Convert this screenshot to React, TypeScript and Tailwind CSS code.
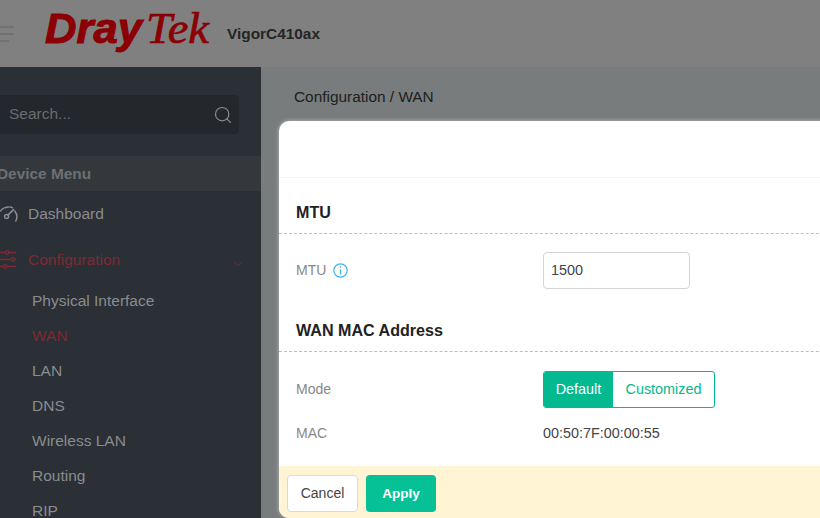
import { Search, ChevronDown } from "lucide-react";

const subItems = ["Physical Interface", "WAN", "LAN", "DNS", "Wireless LAN", "Routing", "RIP"];

function Logo() {
  return (
    <svg width="178" height="54" viewBox="0 0 178 54" className="shrink-0 mr-[-8px]" fill="#8a0005" stroke="#8a0005">
      <text x="1" y="37" fontFamily="'Liberation Sans', Arial, sans-serif" fontWeight="700" fontStyle="italic" fontSize="42" strokeWidth="1" textLength="97" lengthAdjust="spacingAndGlyphs">Dray</text>
      <text x="102" y="37" fontFamily="'Liberation Serif', 'Times New Roman', serif" fontStyle="italic" fontSize="45" strokeWidth="0.7" textLength="63" lengthAdjust="spacingAndGlyphs">Tek</text>
    </svg>
  );
}

function GaugeIcon() {
  return (
    <svg width="20" height="18" viewBox="0 0 20 18" fill="none" stroke="currentColor" strokeWidth="1.5" strokeLinecap="round" className="ml-[-2px]">
      <path d="M1.5 15.5C0 13.5 0 10.5 1 8.5" strokeDasharray="2 1.6" />
      <path d="M2.5 6C5.5 2 11 1 14.5 2.8" strokeDasharray="4 1.5" />
      <path d="M16.8 6C19.3 9.4 19.4 13 17.8 16" />
      <path d="M15.5 4.6L10 10" strokeWidth="1.7" />
      <circle cx="8.6" cy="11.6" r="2" />
    </svg>
  );
}

function SlidersIcon() {
  return (
    <svg width="16" height="19" viewBox="0 0 16 19" fill="none" stroke="currentColor" strokeWidth="1.4">
      <path d="M0 2.5H5.5M9 2.5H16" />
      <circle cx="7.2" cy="2.5" r="1.7" />
      <path d="M0 9.5H11M14.5 9.5H16" />
      <circle cx="12.8" cy="9.5" r="1.7" />
      <path d="M0 16.5H3M6.5 16.5H16" />
      <circle cx="4.8" cy="16.5" r="1.7" />
    </svg>
  );
}

function InfoIcon() {
  return (
    <svg width="15" height="15" viewBox="0 0 15 15" fill="none" stroke="#3db5f0" strokeWidth="1.2">
      <circle cx="7.5" cy="7.5" r="6.7" />
      <path d="M7.5 6.5V11.5" strokeWidth="1.4" />
      <path d="M7.5 3.4V5" strokeWidth="1.4" />
    </svg>
  );
}

export default function App() {
  return (
    <div className="relative flex flex-col w-[820px] h-[518px] overflow-hidden bg-[#787c7c] font-['Liberation_Sans',Arial,sans-serif]">
      <header className="flex items-center h-[67px] shrink-0 bg-[#808080]">
        <div className="flex flex-col gap-[5px] w-[14px]">
          <span className="h-[2px] w-[14px] bg-[#727272]" />
          <span className="h-[2px] w-[14px] bg-[#727272]" />
          <span className="h-[2px] w-[9px] bg-[#727272]" />
        </div>
        <div className="ml-[30px] mt-[-1px]">
          <Logo />
        </div>
        <span className="ml-[13px] text-[15.4px] font-bold text-[#252525]">VigorC410ax</span>
      </header>
      <div className="flex flex-1 min-h-0">
        <aside className="w-[261px] shrink-0 bg-[#2b2f36] overflow-hidden">
          <div className="mt-[28px] ml-[-2px] mr-[22px] h-[39px] flex items-center justify-between rounded bg-[#24272b] pl-[11px] pr-[6px]">
            <span className="text-[15.5px] text-[#6b6d70] mt-[-2px]">Search...</span>
            <Search className="w-[20px] h-[20px] text-[#8b8d8f]" strokeWidth={1.4} />
          </div>
          <div className="mt-[22px] h-[35px] flex items-center bg-[#34383c]">
            <span className="ml-[-3px] text-[15.4px] font-bold text-[#6c7073]">Device Menu</span>
          </div>
          <div className="mt-[5px] h-[35px] flex items-center text-[#8a8c8e]">
            <GaugeIcon />
            <span className="ml-[10px] text-[15.5px]">Dashboard</span>
          </div>
          <div className="mt-[11px] h-[35px] flex items-center text-[#7d2a33]">
            <SlidersIcon />
            <span className="ml-[12px] text-[15.5px]">Configuration</span>
            <ChevronDown className="w-[14px] h-[14px] ml-[111px] mt-[8px]" strokeWidth={1.6} />
          </div>
          <ul className="mt-[6px] pl-[32px] text-[15.5px] text-[#8a8c8e]">
            {subItems.map((label) => (
              <li key={label} className={`h-[35px] leading-[35px] ${label === "WAN" ? "text-[#7d2a33]" : ""}`}>
                {label}
              </li>
            ))}
          </ul>
        </aside>
        <main className="flex-1 min-w-0 pl-[33px] pt-[18px] text-[15.4px] text-[#1e2020]">Configuration / WAN</main>
      </div>

      <div className="absolute left-[279px] top-[121px] w-[600px] h-[397px] flex flex-col rounded-l-[10px] overflow-hidden bg-white shadow-[0_0_4px_rgba(255,255,255,0.5)]">
        <div className="h-[57px] shrink-0 border-b border-[#f5f5f5]" />
        <h3 className="h-[56px] shrink-0 pl-[17px] pt-[25px] leading-[18px] text-[16.1px] font-bold text-[#222] border-b border-dashed border-[#bdbdbd]">MTU</h3>
        <div className="flex items-center h-[72px] shrink-0">
          <div className="w-[264px] pl-[17px] flex items-center gap-[7px] text-sm text-[#888]">
            MTU <InfoIcon />
          </div>
          <div className="w-[147px] h-[37px] flex items-center pl-[7px] pt-[1px] rounded border border-[#d4d4d4] text-[14.4px] text-[#444]">1500</div>
        </div>
        <h3 className="h-[46px] shrink-0 pl-[17px] pt-[15px] leading-[18px] text-[16.1px] font-bold text-[#222] border-b border-dashed border-[#bdbdbd]">WAN MAC Address</h3>
        <div className="flex items-center h-[74px] shrink-0">
          <div className="w-[264px] pl-[17px] text-sm text-[#888]">Mode</div>
          <div className="flex h-[37px] text-[14.4px] rounded-[3px] overflow-hidden border border-[#03b98f]">
            <span className="w-[69px] flex items-center justify-center pt-[1px] bg-[#03b98f] text-white">Default</span>
            <span className="w-[101px] flex items-center justify-center pt-[1px] text-[#03b98f]">Customized</span>
          </div>
        </div>
        <div className="flex items-center h-[13px] shrink-0">
          <div className="w-[264px] pl-[17px] text-sm text-[#888]">MAC</div>
          <div className="text-[14.4px] text-[#444] pt-[2px]">00:50:7F:00:00:55</div>
        </div>
        <div className="mt-[27px] flex-1 flex items-center gap-[8px] pl-[8px] pt-[3px] bg-[#fff4d4]">
          <button className="w-[71px] h-[37px] pb-[1px] rounded border border-[#d9d9d9] bg-white text-sm text-[#444]">Cancel</button>
          <button className="w-[70px] h-[37px] pt-[1px] rounded bg-[#06c096] text-[13.5px] font-bold text-white">Apply</button>
        </div>
      </div>
    </div>
  );
}
